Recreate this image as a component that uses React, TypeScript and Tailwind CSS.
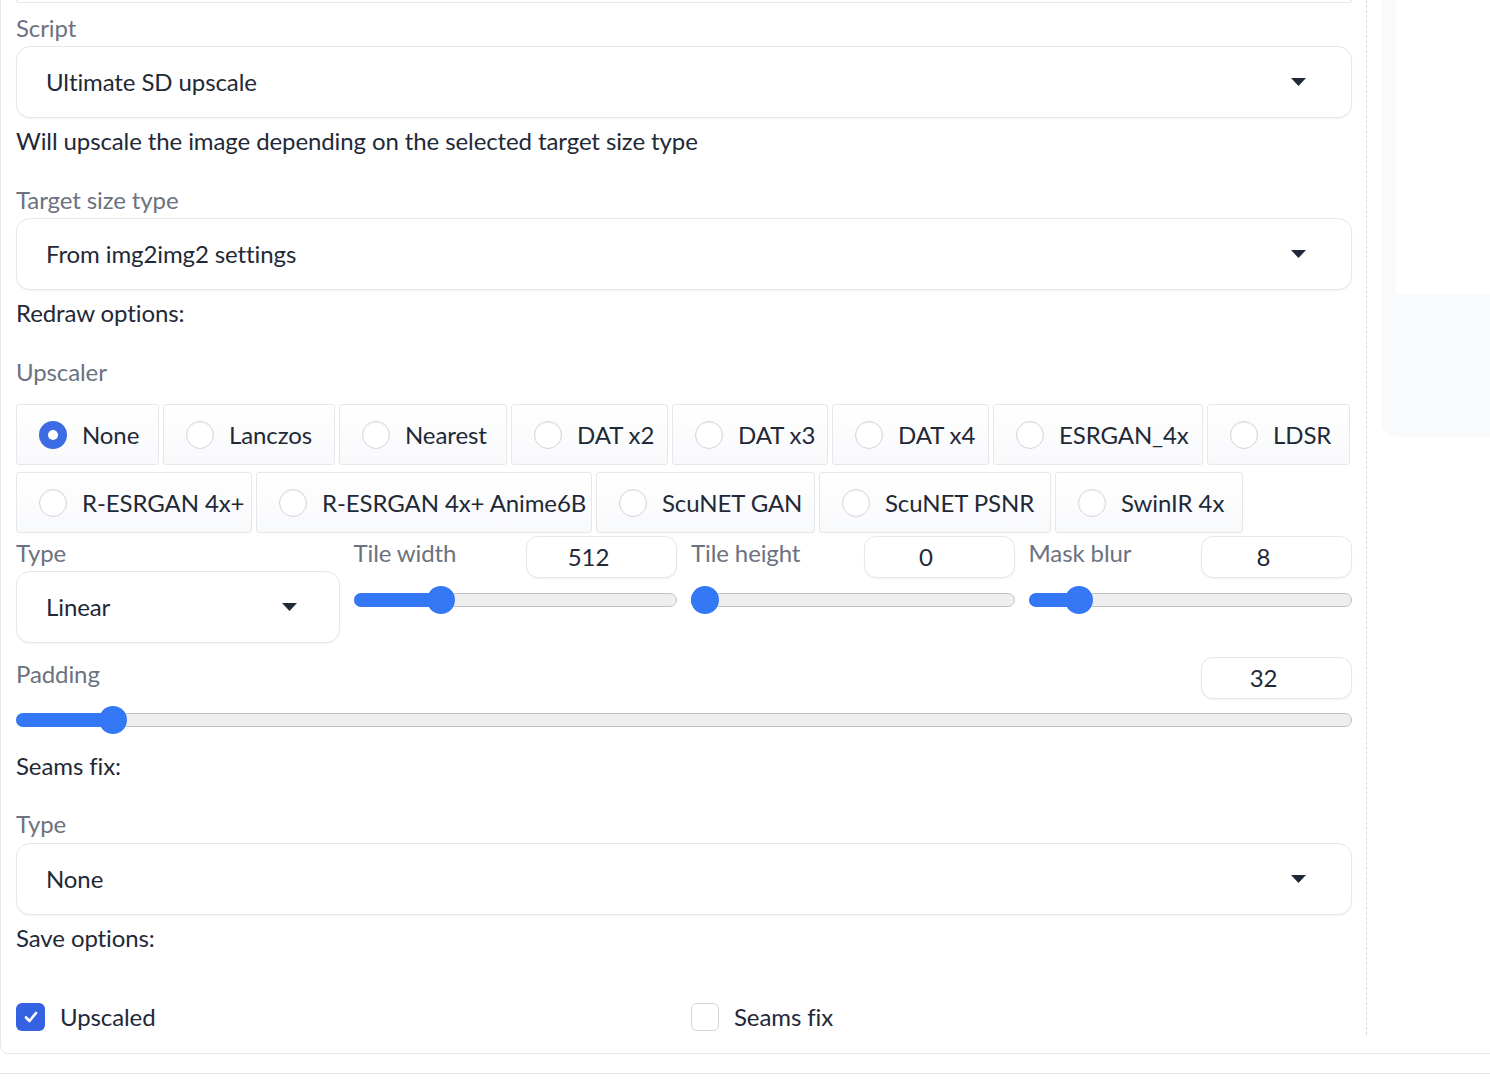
import React from "react";

type Upscaler = { name: string; w: string; checked?: boolean };

const upscalers: Upscaler[] = [
  { name: "None", w: "w-[143px]", checked: true },
  { name: "Lanczos", w: "w-[172px]" },
  { name: "Nearest", w: "w-[168px]" },
  { name: "DAT x2", w: "w-[157px]" },
  { name: "DAT x3", w: "w-[156px]" },
  { name: "DAT x4", w: "w-[157px]" },
  { name: "ESRGAN_4x", w: "w-[210px]" },
  { name: "LDSR", w: "w-[143px]" },
  { name: "R-ESRGAN 4x+", w: "w-[236px]" },
  { name: "R-ESRGAN 4x+ Anime6B", w: "w-[336px]" },
  { name: "ScuNET GAN", w: "w-[219px]" },
  { name: "ScuNET PSNR", w: "w-[232px]" },
  { name: "SwinIR 4x", w: "w-[188px]" },
];

const Caret = () => (
  <svg width="15" height="8" viewBox="0 0 15 8" className="shrink-0">
    <polygon points="0,0 15,0 7.5,8" fill="#1f2937" />
  </svg>
);

const Label = ({ children }: { children: React.ReactNode }) => (
  <div className="leading-[30px] text-[#6b7280]">{children}</div>
);

const Dropdown = ({ value, pr = "pr-[45px]" }: { value: string; pr?: string }) => (
  <div
    className={`mt-[3px] flex h-[72px] items-center justify-between rounded-[14px] border border-[#e5e7eb] bg-white pl-[29px] ${pr} shadow-[0_1px_2px_rgba(0,0,0,0.05)]`}
  >
    <span className="text-[#1f2937]">{value}</span>
    <Caret />
  </div>
);

const NumberBox = ({ value }: { value: string }) => (
  <div className="flex h-[42px] w-[151px] items-center justify-center rounded-[12px] border border-[#e5e7eb] bg-white pr-[26px] text-[#1f2937] shadow-[0_1px_2px_rgba(0,0,0,0.05)]">
    {value}
  </div>
);

const Slider = ({ p }: { p: number }) => (
  <div className="relative flex h-[28px] items-center">
    <div className="relative h-[14px] w-full rounded-full border border-[#c2c2c2] bg-[#efefef]">
      <div
        className="absolute -left-px -top-px h-[14px] rounded-full bg-[#3478f6]"
        style={{ width: `calc(${p} * (100% - 28px) + 16px)` }}
      />
    </div>
    <div
      className="absolute top-0 h-[28px] w-[28px] rounded-full bg-[#3478f6]"
      style={{ left: `calc(${p} * (100% - 28px))` }}
    />
  </div>
);

const SliderField = ({ label, value, p }: { label: string; value: string; p: number }) => (
  <div>
    <div className="flex h-[42px] items-start justify-between">
      <div className="pt-[2px]">
        <Label>{label}</Label>
      </div>
      <NumberBox value={value} />
    </div>
    <div className="mt-[8px]">
      <Slider p={p} />
    </div>
  </div>
);

const Radio = ({ item }: { item: Upscaler }) => (
  <div
    className={`${item.w} flex h-[61px] items-center gap-[15px] rounded-[3px] border border-[#e5e7eb] bg-gradient-to-b from-white to-[#f8f9fb] pl-[22px]`}
  >
    {item.checked ? (
      <div className="flex h-[28px] w-[28px] items-center justify-center rounded-full bg-[#3c6be4]">
        <div className="h-[10px] w-[10px] rounded-full bg-white" />
      </div>
    ) : (
      <div className="h-[28px] w-[28px] rounded-full border border-[#d1d5db] bg-white shadow-[inset_0_1px_2px_rgba(0,0,0,0.04)]" />
    )}
    <span className="whitespace-nowrap text-[#1f2937]">{item.name}</span>
  </div>
);

const Checkbox = ({ label, checked }: { label: string; checked?: boolean }) => (
  <div className="flex h-[28px] items-center gap-[15px] leading-[28px]">
    {checked ? (
      <div className="flex h-[28px] w-[29px] items-center justify-center rounded-[6px] bg-[#3562e3]">
        <svg width="16" height="16" viewBox="0 0 16 16">
          <path d="M3 8.5 L6.5 12 L13 4" stroke="white" strokeWidth="2.6" fill="none" strokeLinecap="round" strokeLinejoin="round" />
        </svg>
      </div>
    ) : (
      <div className="h-[28px] w-[28px] rounded-[6px] border border-[#d1d5db] bg-white" />
    )}
    <span className="text-[#1f2937]">{label}</span>
  </div>
);

export default function App() {
  return (
    <div className="h-[1092px] w-[1490px] overflow-hidden bg-white font-['Lato',sans-serif] text-[24px] tracking-[-0.1px] text-[#1f2937]">
      <div className="flex rounded-bl-[8px] border-b border-l border-[#e5e7eb] pb-[18px]">
        <div className="w-[1366px] shrink-0 border-r border-dashed border-[#d9dbe0] pb-[4px] pl-[15px] pr-[14px]">
          <div className="h-[3px] rounded-b-[4px] border-x border-b border-[#e5e7eb]" />

          <div className="mt-[10px]">
            <Label>Script</Label>
          </div>
          <Dropdown value="Ultimate SD upscale" />
          <div className="mt-[8px] leading-[30px]">Will upscale the image depending on the selected target size type</div>

          <div className="mt-[29px]">
            <Label>Target size type</Label>
          </div>
          <Dropdown value="From img2img2 settings" />
          <div className="mt-[8px] leading-[30px]">Redraw options:</div>

          <div className="mt-[29px]">
            <Label>Upscaler</Label>
          </div>
          <div className="mt-[17px] flex flex-wrap gap-x-[4px] gap-y-[7px]">
            {upscalers.map((u) => (
              <Radio key={u.name} item={u} />
            ))}
          </div>

          <div className="mt-[3px] grid grid-cols-4 gap-x-[14px]">
            <div className="pt-[2px]">
              <Label>Type</Label>
              <Dropdown value="Linear" pr="pr-[42px]" />
            </div>
            <SliderField label="Tile width" value="512" p={0.25} />
            <SliderField label="Tile height" value="0" p={0} />
            <SliderField label="Mask blur" value="8" p={0.122} />
          </div>

          <div className="mt-[14px]">
            <div className="flex h-[42px] items-start justify-between">
              <div className="pt-[2px]">
                <Label>Padding</Label>
              </div>
              <NumberBox value="32" />
            </div>
            <div className="mt-[7px]">
              <Slider p={0.0635} />
            </div>
          </div>

          <div className="mt-[17px] leading-[30px]">Seams fix:</div>

          <div className="mt-[28px]">
            <Label>Type</Label>
          </div>
          <div className="-mt-[2px] pt-[3px]">
            <Dropdown value="None" />
          </div>
          <div className="mt-[8px] leading-[30px]">Save options:</div>

          <div className="mt-[50px] grid grid-cols-2 gap-x-[14px]">
            <Checkbox label="Upscaled" checked />
            <Checkbox label="Seams fix" />
          </div>
        </div>

        <div className="flex-1 pl-[14px]">
          <div className="h-[437px] rounded-bl-[16px] bg-[#f9fafb] pl-[15px]">
            <div className="h-[294px] bg-white" />
          </div>
        </div>
      </div>
      <div className="mt-[19px] border-t border-[#e5e7eb]" />
    </div>
  );
}
